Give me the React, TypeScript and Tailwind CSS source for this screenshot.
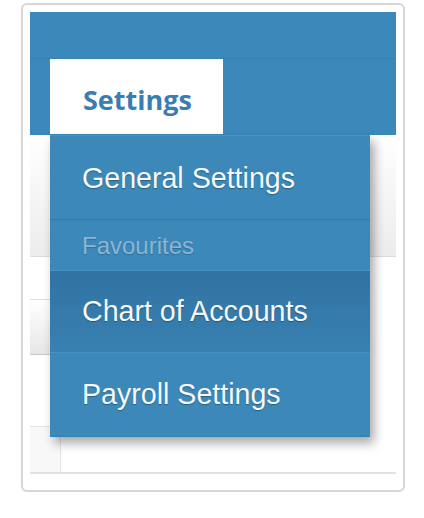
import React from 'react';

const menuText = 'pl-8 text-[28.6px] leading-none text-[#f5f9fc] [text-shadow:0_1px_1px_rgba(0,0,0,0.3)]';

export default function App() {
  return (
    <div className="relative h-[518px] w-[424px] bg-white font-['Liberation_Sans',Arial,sans-serif]">
      {/* Card */}
      <div className="absolute left-[21px] top-[3px] h-[489px] w-[384px] rounded-[6px] border-2 border-[#d6d6d6] bg-white p-[7px]">
        {/* Blue header */}
        <div className="flex h-[123px] flex-col bg-[#3b89ba]">
          <div className="h-[47px] border-b border-[#367fae]" />
          <div className="flex h-[75px] pl-5">
            <div className="flex w-[173px] items-center bg-white pl-[33px] pt-[7px] font-['Open_Sans',sans-serif] text-[27px] font-bold text-[#3a7db1]">
              Settings
            </div>
          </div>
        </div>

        {/* Toolbar */}
        <div className="h-[122px] border-b border-[#dcdcdc] bg-gradient-to-b from-white to-[#ececec]" />
        <div className="h-[42px]" />
        <div className="h-[56px] w-[120px] border-y border-t-[#dedede] border-b-[#c8c8c8] bg-gradient-to-b from-white to-[#e6e6e6]" />
        <div className="h-[72px] border-b border-[#e4e4e4] w-[120px]" />
        <div className="flex h-[47px] border-b-2 border-[#e2e2e2]">
          <div className="w-[31px] border-r border-[#e2e2e2] bg-[#f8f8f8]" />
        </div>
      </div>

      {/* Dropdown menu */}
      <div className="absolute left-[50px] top-[135px] w-[320px] bg-[#3b88b9] shadow-[4px_6px_10px_rgba(0,0,0,0.35)]">
        <div className="flex h-[85px] items-center border-t border-b border-t-[#4792c3] border-b-[#3378a6] pt-[2px]">
          <span className={menuText}>General Settings</span>
        </div>
        <div className="flex h-[51px] items-center border-b border-[#4994c5] pt-[2px]">
          <span className="pl-8 text-[24px] leading-none text-[#8ab6d4] [text-shadow:0_1px_1px_rgba(0,0,0,0.2)]">Favourites</span>
        </div>
        <div className="flex h-[82px] items-center border-b border-[#4690c1] bg-gradient-to-b from-[#3073a2] to-[#3881b2]">
          <span className={menuText}>Chart of Accounts</span>
        </div>
        <div className="flex h-[84px] items-center border-b border-[#357fae]">
          <span className={menuText}>Payroll Settings</span>
        </div>
      </div>
    </div>
  );
}
